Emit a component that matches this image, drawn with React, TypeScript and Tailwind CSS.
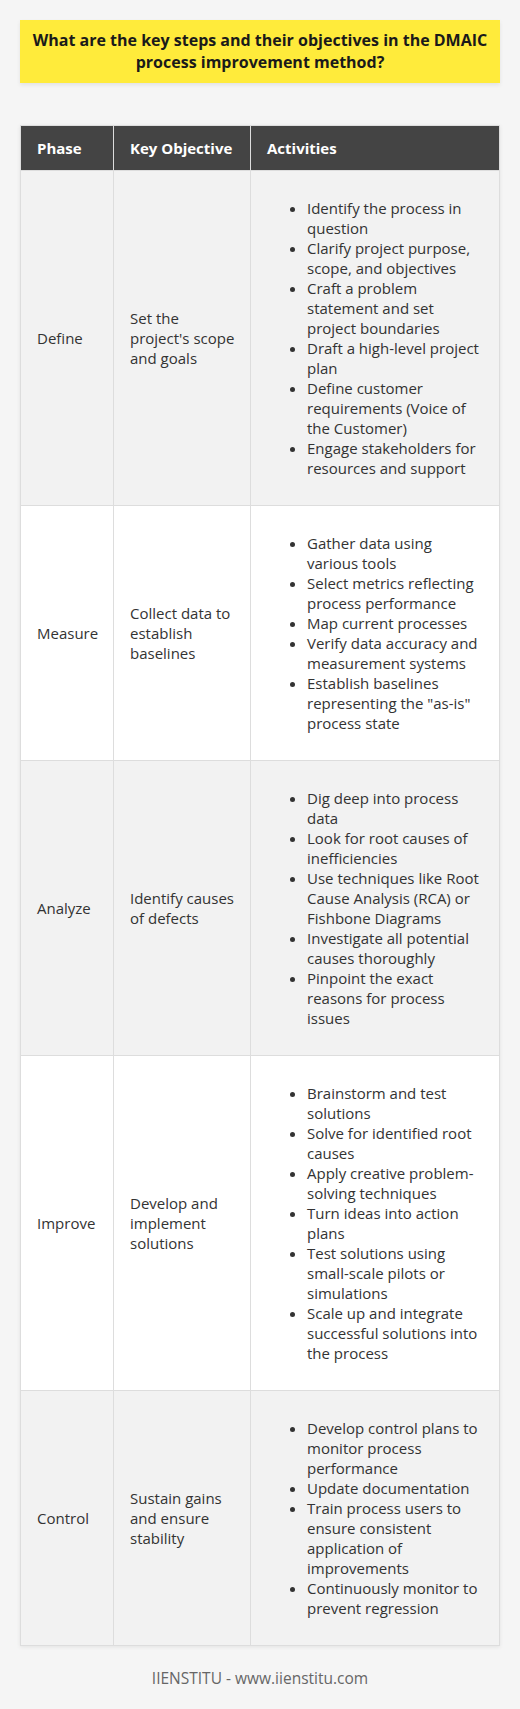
import React from "react";

type Row = { phase: string; objective: string; activities: string[] };

const rows: Row[] = [
  {
    phase: "Define",
    objective: "Set the project's scope and goals",
    activities: [
      "Identify the process in question",
      "Clarify project purpose, scope, and objectives",
      "Craft a problem statement and set project boundaries",
      "Draft a high-level project plan",
      "Define customer requirements (Voice of the Customer)",
      "Engage stakeholders for resources and support",
    ],
  },
  {
    phase: "Measure",
    objective: "Collect data to establish baselines",
    activities: [
      "Gather data using various tools",
      "Select metrics reflecting process performance",
      "Map current processes",
      "Verify data accuracy and measurement systems",
      'Establish baselines representing the "as-is" process state',
    ],
  },
  {
    phase: "Analyze",
    objective: "Identify causes of defects",
    activities: [
      "Dig deep into process data",
      "Look for root causes of inefficiencies",
      "Use techniques like Root Cause Analysis (RCA) or Fishbone Diagrams",
      "Investigate all potential causes thoroughly",
      "Pinpoint the exact reasons for process issues",
    ],
  },
  {
    phase: "Improve",
    objective: "Develop and implement solutions",
    activities: [
      "Brainstorm and test solutions",
      "Solve for identified root causes",
      "Apply creative problem-solving techniques",
      "Turn ideas into action plans",
      "Test solutions using small-scale pilots or simulations",
      "Scale up and integrate successful solutions into the process",
    ],
  },
  {
    phase: "Control",
    objective: "Sustain gains and ensure stability",
    activities: [
      "Develop control plans to monitor process performance",
      "Update documentation",
      "Train process users to ensure consistent application of improvements",
      "Continuously monitor to prevent regression",
    ],
  },
];

export default function App() {
  return (
    <div
      className="min-h-[1709px] bg-[#f5f5f5] px-5 pt-5 pb-5 text-[#333]"
      style={{ fontFamily: '"Open Sans", "Noto Sans", Arial, sans-serif' }}
    >
      <div className="bg-[#ffeb3b] px-2 pt-[10px] pb-[10px] text-center text-[16px] font-bold leading-[21.5px] text-[#1a1a1a] shadow-[0_2px_4px_rgba(0,0,0,0.08)]">
        What are the key steps and their objectives in the DMAIC process improvement method?
      </div>

      <table className="mt-[42px] w-[480px] table-fixed border-collapse text-[15px] leading-[20px] shadow-[0_1px_4px_rgba(0,0,0,0.08)]">
        <colgroup>
          <col className="w-[93px]" />
          <col className="w-[137px]" />
          <col />
        </colgroup>
        <thead>
          <tr className="bg-[#444]">
            <th className="border border-[#ddd] px-4 py-3 text-left font-bold text-white">Phase</th>
            <th className="border border-[#ddd] py-3 pl-4 pr-3 text-left font-bold text-white">Key Objective</th>
            <th className="border border-[#ddd] px-4 py-3 text-left font-bold text-white">Activities</th>
          </tr>
        </thead>
        <tbody>
          {rows.map((r, i) => (
            <tr key={r.phase} className={i % 2 === 0 ? "bg-[#f2f2f2]" : "bg-white"}>
              <td className="border border-[#ddd] px-4 py-3 align-middle">{r.phase}</td>
              <td className="border border-[#ddd] py-3 pl-4 pr-3 align-middle">{r.objective}</td>
              <td className="border border-[#ddd] px-4 py-3 align-middle">
                <ul className="my-[15px] list-disc pl-10">
                  {r.activities.map((a) => (
                    <li key={a}>{a}</li>
                  ))}
                </ul>
              </td>
            </tr>
          ))}
        </tbody>
      </table>

      <div className="mt-[22px] text-center text-[15.5px] leading-[20px] text-[#666]">
        IIENSTITU - www.iienstitu.com
      </div>
    </div>
  );
}
